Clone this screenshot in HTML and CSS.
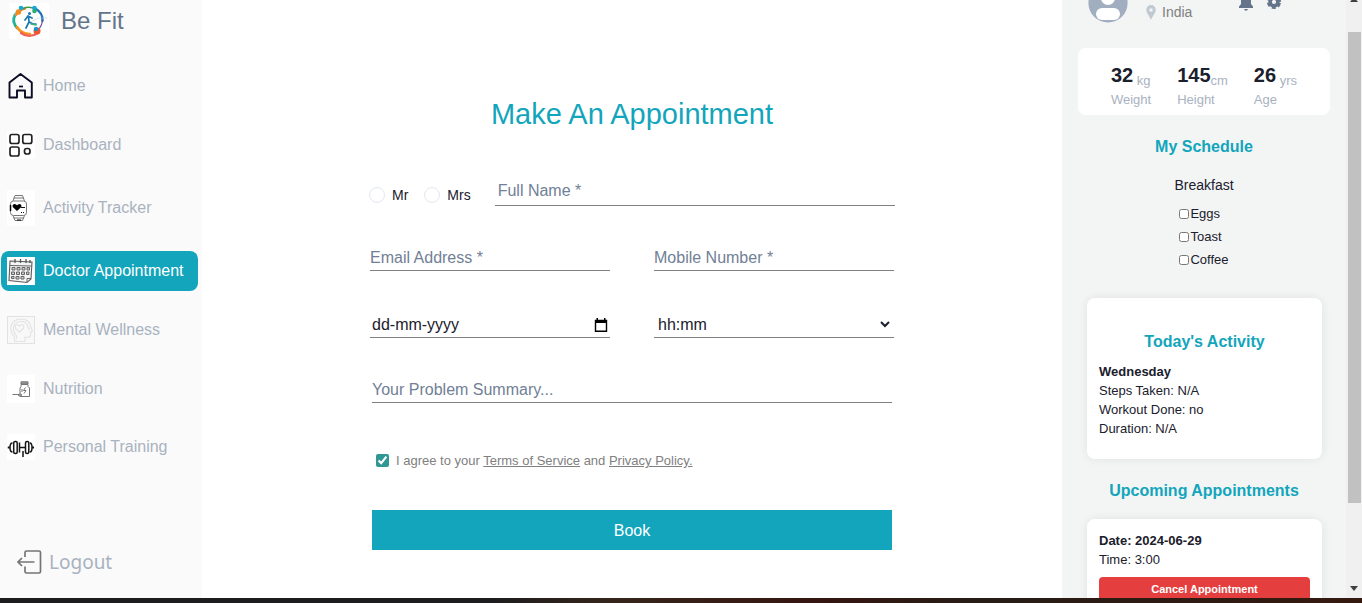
FILE: index.html
```html
<!DOCTYPE html>
<html lang="en">
<head>
<meta charset="utf-8">
<title>Be Fit</title>
<link rel="stylesheet" href="styles.css">
</head>
<body>
<div class="app">
  <aside class="sidebar">
    <div class="brand">
      <svg class="brand-logo" viewBox="0 0 40 36" aria-hidden="true">
        <rect width="40" height="36" fill="#fff"/>
        <g fill="none" stroke-linecap="round">
          <path d="M8 25A14 13 0 0 1 6 12" stroke="#1fb08c" stroke-width="2.600"/>
          <path d="M7 12A14 13 0 0 1 16 5.500" stroke="#f58a1f" stroke-width="2.400"/>
          <path d="M14 5.500Q20 3 27 6" stroke="#3c9b4e" stroke-width="1.500"/>
          <path d="M27 6Q34 10 33.500 18" stroke="#1c74bb" stroke-width="2.400"/>
          <path d="M33.500 17Q33 23 29 27" stroke="#6a4fa0" stroke-width="1.200"/>
          <path d="M8 24Q12 31 21 31" stroke="#f7941d" stroke-width="2.600"/>
          <path d="M12 30Q20 36 29 30" stroke="#f2605a" stroke-width="2.200"/>
          <path d="M4 20Q2.500 14 7 9" stroke="#35c3d6" stroke-width="1"/>
          <path d="M21 19L30 15L38 15" stroke="#b9cfdc" stroke-width=".6"/>
          <path d="M19.500 13L20 19L17 25M20 19L24 21L27 21M16 17L19 13L23 15" stroke="#1b78ae" stroke-width="1.700"/>
          <path d="M22 21L27 22" stroke="#3bb27a" stroke-width="1.500"/>
        </g>
        <circle cx="20.500" cy="10.500" r="1.500" fill="#1b78ae"/>
        <circle cx="12" cy="5" r="2.300" fill="#19a7e0"/>
        <circle cx="25.500" cy="5" r="2.300" fill="#19a7e0"/>
        <circle cx="25.500" cy="8" r="2.300" fill="#27ae73"/>
        <circle cx="9.500" cy="9" r="2.700" fill="#f58a1f"/>
        <circle cx="28" cy="28" r="3.500" fill="#f0562b"/>
        <circle cx="27" cy="26" r="2.200" fill="#1993d1"/>
      </svg>
      <span class="brand-name">Be Fit</span>
    </div>
    <nav class="nav">
      <a class="nav-item" href="#home">
        <svg class="nav-icon" viewBox="0 0 28 28" aria-hidden="true"><path d="M2.500 10.500L13.500 2L24.800 10.500V25.500H18V18.500H10V25.500H2.500Z" fill="none" stroke="#0b0b24" stroke-width="1.900" stroke-linejoin="round"/><path d="M12 14.500H16" stroke="#0b0b24" stroke-width="1.700"/></svg>
        Home</a>
      <a class="nav-item" href="#dashboard">
        <svg class="nav-icon" viewBox="0 0 28 28" aria-hidden="true"><rect width="28" height="28" fill="#fff"/><g fill="none" stroke="#222" stroke-width="1.700"><rect x="3" y="3.500" width="9" height="9" rx="2"/><rect x="15.800" y="3.500" width="9" height="9" rx="2"/><rect x="3" y="16" width="9" height="9" rx="2"/><rect x="17.500" y="17.500" width="5.500" height="5.500" rx="2.300"/></g></svg>
        Dashboard</a>
      <a class="nav-item" href="#activity">
        <svg class="nav-icon nav-icon-tall" viewBox="0 0 28 36" aria-hidden="true"><rect width="28" height="36" fill="#fff"/><g fill="none" stroke="#777" stroke-width="1"><rect x="3.500" y="11" width="16" height="14.500" rx="3"/><path d="M6 11L8 5.500H15.500L17.500 11M6.500 8H17M6 25.500L8 30.500H15.500L17.500 25.500M6.500 28H17"/></g><path d="M3.500 15V21" stroke="#000" stroke-width="1.500"/><path d="M10 21L5.700 17Q5 14 8 14L10 15.300L12 14Q15 14 14.300 17Z" fill="#000"/><path d="M14 17.500H18M14 22.500H15M16 22.500H17M10 30H14" stroke="#111"/></svg>
        Activity Tracker</a>
      <a class="nav-item nav-item-active" href="#doctor" aria-current="page">
        <svg class="nav-icon" viewBox="0 0 28 28" aria-hidden="true"><rect width="28" height="28" fill="#fff"/><path d="M3 4L25 5L24 22L20 25.500L2 23.500Z" fill="#f4f4f4" stroke="#5c5c5c" stroke-width="1.100"/><path d="M3 8.500L24.500 9M20 25V21.500H24" fill="none" stroke="#666"/><path d="M8 2V6M13.500 2V6M19 2V6M23 3V6" stroke="#555" stroke-width="1.300"/><g fill="#ccc" stroke="#666" stroke-width="1"><path d="M5 10.500H8V13H5ZM10 10.500H13V13H10ZM15 10.500H18V13H15ZM20 10.500H22.500V13H20ZM4.500 15H7.500V17.500H4.500ZM9.500 15H12.500V17.500H9.500ZM14.500 15H17.500V17.500H14.500ZM19.500 15H22V17.500H19.500ZM4.500 19.500H7V21.500H4.500ZM9 19.500H12V22H9ZM14 19.500H17V22H14Z"/></g></svg>
        Doctor Appointment</a>
      <a class="nav-item" href="#mental">
        <svg class="nav-icon" viewBox="0 0 28 28" aria-hidden="true"><rect x=".5" y=".5" width="27" height="27" fill="#f8f8f8" stroke="#e2e2e2"/><g fill="none" stroke="#e3e3e3" stroke-width="1.100"><path d="M7.500 25.500V21Q3 16 4 10Q6 3 14 3Q22 3 23.500 10L25.500 15L23.500 16V20Q23 22 18 21V25.500Z"/><path d="M12.500 16L8.500 12.500Q7.500 9 10.500 8.500L12.500 10L14.500 8.500Q17.500 9 16.500 12.500Z"/><path d="M9.500 23V20Q6 16 6.500 11Q8 5.500 14 5.500Q20 5.500 21 11L22.500 14"/></g></svg>
        Mental Wellness</a>
      <a class="nav-item" href="#nutrition">
        <svg class="nav-icon" viewBox="0 0 28 28" aria-hidden="true"><rect width="28" height="28" fill="#fff"/><g fill="none" stroke="#777" stroke-width="1"><path d="M14 9.500H21V11.500L22.500 13V21.500H13V13L14 11.500Z"/><path d="M14 6.800H21V9H14Z" fill="#999"/><path d="M18.500 12.500L16.500 15.500H19L17 18.500M5.500 19.500H12M11 20Q13 17.500 15 20Q13 22.500 11 20M15 14V17"/></g></svg>
        Nutrition</a>
      <a class="nav-item" href="#training">
        <svg class="nav-icon nav-icon-short" viewBox="0 0 28 26" aria-hidden="true"><rect width="28" height="26" fill="#fff"/><g fill="none" stroke="#151515" stroke-width="1.500"><rect x="6.700" y="7.500" width="3.500" height="12" rx="1.500"/><path d="M5.500 9Q3 9 3 13.500Q3 18 5.500 18M1.500 12.500V14.500M12.500 8.500V18.500M12.500 13.500H18M16 17V23"/><rect x="18.500" y="7.500" width="3.300" height="12" rx="1.500"/><path d="M22.800 9Q25 9 25 13.500Q25 18 22.800 18M26.300 12.500V14.500"/></g></svg>
        Personal Training</a>
    </nav>
    <a class="logout" href="#logout">
      <svg class="logout-icon" viewBox="0 0 26 26" aria-hidden="true"><path d="M9 8V3.500Q9 2 10.500 2H23Q24.500 2 24.500 3.500V22.500Q24.500 24 23 24H10.500Q9 24 9 22.500V17.500M18.500 13H2M6 9L2 13L6 17" fill="none" stroke="#757575" stroke-width="1.700"/></svg>
      Logout</a>
  </aside>

  <main class="main">
    <form class="form">
      <h1 class="form-title">Make An Appointment</h1>
      <div class="name-row">
        <label class="radio"><input type="radio" name="title" value="mr">Mr</label>
        <label class="radio"><input type="radio" name="title" value="mrs">Mrs</label>
        <input class="field field-name" type="text" placeholder="Full Name *" aria-label="Full Name">
      </div>
      <div class="pair">
        <input class="field" type="email" placeholder="Email Address *" aria-label="Email Address">
        <input class="field" type="tel" placeholder="Mobile Number *" aria-label="Mobile Number">
      </div>
      <div class="pair">
        <div class="field date">
          <input class="date-input" type="text" placeholder="dd-mm-yyyy" aria-label="Date">
          <button class="date-button" type="button" aria-label="Open calendar"><svg viewBox="0 0 14 14" aria-hidden="true"><path d="M1.500 2.500H12.500V13.200H1.500Z" fill="none" stroke="#000" stroke-width="1.400"/><path d="M1 2H13V5H1ZM2.500 0H4V3H2.500ZM10 0H11.500V3H10Z"/></svg></button>
        </div>
        <div class="field select-wrap">
          <select class="select" aria-label="Time"><option>hh:mm</option></select>
          <svg class="chevron" viewBox="0 0 10 7" aria-hidden="true"><path d="M1 1L5 5L9 1" fill="none" stroke="#1a202c" stroke-width="2"/></svg>
        </div>
      </div>
      <div class="wide">
        <input class="field" type="text" placeholder="Your Problem Summary..." aria-label="Your Problem Summary">
        <div class="agree">
          <input class="agree-box" type="checkbox" id="agree" checked>
          <label for="agree">I agree to your <a href="#terms">Terms of Service</a> and <a href="#privacy">Privacy Policy.</a></label>
        </div>
        <button class="book" type="submit">Book</button>
      </div>
    </form>
  </main>

  <aside class="panel">
    <div class="profile">
      <svg class="avatar" viewBox="0 0 40 40" aria-hidden="true"><circle cx="20" cy="20" r="19.600" fill="#a0aec0"/><circle cx="20" cy="15" r="7" fill="#fff"/><rect x="8" y="25" width="24" height="12" rx="6" fill="#fff"/></svg>
      <div class="place">
        <svg class="pin" viewBox="0 0 10 15" aria-hidden="true"><path d="M5 0A4.700 4.700 0 0 0 .3 5C.3 8 3.500 11 5 15C6.500 11 9.700 8 9.700 5A4.700 4.700 0 0 0 5 0ZM5 3.300A1.700 1.700 0 1 1 5 6.700A1.700 1.700 0 0 1 5 3.300Z" fill="#c1c9d2"/></svg>
        India
      </div>
      <div class="tools">
        <button class="tool" type="button" aria-label="Notifications"><svg viewBox="0 0 16 18" aria-hidden="true"><path d="M8 0Q3 1 3 7V11L1 13.500V15H15V13.500L13 11V7Q13 1 8 0ZM6 16H10Q9.500 17.700 8 17.700Q6.500 17.700 6 16Z" fill="#64748b"/></svg></button>
        <button class="tool" type="button" aria-label="Settings"><svg viewBox="0 0 16 18" aria-hidden="true"><circle cx="8" cy="9" r="3.900" fill="none" stroke="#64748b" stroke-width="3.600"/><circle cx="8" cy="9" r="5.700" fill="none" stroke="#64748b" stroke-width="2.800" stroke-dasharray="3.800 2.169" stroke-dashoffset="-1.100"/></svg></button>
      </div>
    </div>
    <div class="stats">
      <div class="stat"><div class="stat-value"><strong>32</strong>&nbsp;<span>kg</span></div><div class="stat-label">Weight</div></div>
      <div class="stat"><div class="stat-value"><strong>145</strong><span>cm</span></div><div class="stat-label">Height</div></div>
      <div class="stat"><div class="stat-value"><strong>26</strong>&nbsp;<span>yrs</span></div><div class="stat-label">Age</div></div>
    </div>
    <section class="schedule">
      <h2 class="heading">My Schedule</h2>
      <h3 class="meal">Breakfast</h3>
      <div class="foods">
        <label class="food"><input type="checkbox">Eggs</label>
        <label class="food"><input type="checkbox">Toast</label>
        <label class="food"><input type="checkbox">Coffee</label>
      </div>
    </section>
    <section class="card activity">
      <h2 class="heading">Today's Activity</h2>
      <p><strong>Wednesday</strong></p>
      <p>Steps Taken: N/A</p>
      <p>Workout Done: no</p>
      <p>Duration: N/A</p>
    </section>
    <h2 class="heading upcoming">Upcoming Appointments</h2>
    <section class="card">
      <p><strong>Date: 2024-06-29</strong></p>
      <p>Time: 3:00</p>
      <button class="cancel" type="button">Cancel Appointment</button>
    </section>
  </aside>

  <div class="scrollbar" aria-hidden="true">
    <svg class="arrow" viewBox="0 0 8 5"><path d="M0 5L4 0L8 5Z" fill="#404040"/></svg>
    <div class="track"><div class="thumb"></div></div>
    <svg class="arrow" viewBox="0 0 8 5"><path d="M0 0H8L4 5Z" fill="#404040"/></svg>
  </div>
</div>
<div class="taskbar"></div>
</body>
</html>
```
FILE: styles.css
```css
* {
  box-sizing: border-box;
}

body {
  margin: 0;
  height: 100vh;
  display: flex;
  flex-direction: column;
  overflow: hidden;
  background: #fff;
  color: #1a202c;
  font-family: "Liberation Sans", Arial, sans-serif;
  font-size: 13px;
  line-height: 19px;
}

h1, h2, h3, p {
  margin: 0;
}

input, select, button {
  font: inherit;
  color: inherit;
  margin: 0;
}

button {
  border: 0;
  padding: 0;
  background: none;
  cursor: pointer;
}

.app {
  flex: 1;
  min-height: 0;
  display: grid;
  grid-template-columns: 202px 1fr 284px 16px;
  grid-template-rows: 100%;
  overflow: hidden;
}

.taskbar {
  height: 5px;
  background: linear-gradient(90deg, #1d1c1e 0%, #1d1c1e 36%, #35251a 45%, #35150f 60%, #261c16 72%, #35190f 100%);
}

/* Sidebar */
.sidebar {
  display: flex;
  flex-direction: column;
  background: #fafafa;
  padding: 3px 4px 22px 1px;
}

.brand {
  display: flex;
  align-items: center;
  gap: 12px;
  padding-left: 8px;
}

.brand-logo {
  width: 40px;
  height: 36px;
}

.brand-name {
  font-size: 24px;
  line-height: 36px;
  color: #64748b;
}

.nav {
  display: flex;
  flex-direction: column;
  gap: 19px;
  margin-top: 27px;
}

.nav-item {
  display: flex;
  align-items: center;
  gap: 8px;
  padding: 6px;
  border-radius: 8px;
  font-size: 16px;
  line-height: 20px;
  color: #a9b2bf;
  text-decoration: none;
}

.nav-item-active {
  background: #12a5bc;
  color: #fff;
}

.nav-icon {
  width: 28px;
  height: 28px;
}

.nav-icon-tall {
  height: 36px;
}

.nav-icon-short {
  height: 26px;
}

.logout {
  display: flex;
  align-items: center;
  gap: 7px;
  margin-top: auto;
  padding-left: 15px;
  font-family: "Noto Sans", sans-serif;
  font-size: 19px;
  line-height: 28px;
  color: #a9b2bf;
  text-decoration: none;
}

.logout-icon {
  width: 26px;
  height: 26px;
}

/* Appointment form */
.main {
  display: flex;
  justify-content: center;
  align-items: flex-start;
  padding-top: 96px;
}

.form {
  width: 100%;
  max-width: 526px;
}

.form-title {
  font-size: 29px;
  line-height: 36px;
  font-weight: 400;
  text-align: center;
  color: #12a5bc;
}

.name-row {
  display: flex;
  align-items: center;
  margin-top: 44px;
}

.radio {
  display: flex;
  align-items: center;
  gap: 7px;
  margin-right: 16px;
  padding-top: 8px;
  font-size: 14px;
}

.radio input {
  appearance: none;
  width: 16px;
  height: 16px;
  border: 1px solid #e2e8f0;
  border-radius: 50%;
}

.radio input:checked {
  border: 5px solid #12a5bc;
}

.field {
  width: 100%;
  height: 26px;
  padding: 0;
  border: 0;
  border-bottom: 1px solid #808080;
  border-radius: 0;
  background: transparent;
  font-size: 16px;
  line-height: 24px;
  outline: 0;
}

.field::placeholder {
  color: #718096;
  opacity: 1;
}

.field-name {
  flex: 1;
  width: auto;
  min-width: 0;
  height: 30px;
  margin-left: 8px;
  padding-left: 3px;
}

.pair {
  display: grid;
  grid-template-columns: 1fr 1fr;
  gap: 44px;
  padding: 0 1px;
  margin-top: 39px;
}

.pair + .pair {
  margin-top: 41px;
}

.date,
.select-wrap {
  display: flex;
  align-items: center;
  position: relative;
}

.date-input {
  flex: 1;
  min-width: 0;
  padding: 0 2px;
  border: 0;
  background: transparent;
  outline: 0;
}

.date-input::placeholder {
  color: #1a202c;
  opacity: 1;
}

.date-button {
  display: flex;
  margin-right: 2px;
}

.date-button svg {
  width: 14px;
  height: 14px;
}

.select {
  appearance: none;
  width: 100%;
  padding: 0 20px 0 4px;
  border: 0;
  background: transparent;
  outline: 0;
}

.chevron {
  position: absolute;
  right: 4px;
  top: 9px;
  width: 10px;
  height: 7px;
  pointer-events: none;
}

.wide {
  padding: 0 3px;
  margin-top: 39px;
}

.agree {
  display: flex;
  align-items: center;
  gap: 7px;
  margin: 48px 0 40px 4px;
  color: #808080;
}

.agree a {
  color: inherit;
}

.agree-box {
  width: 13px;
  height: 13px;
  accent-color: #319795;
}

.book {
  display: block;
  width: 100%;
  height: 40px;
  background: #12a5bc;
  color: #fff;
  font-size: 16px;
}

/* Right panel */
.panel {
  background: #f3f5f5;
  padding: 0 16px;
}

/* The panel is scrolled so only the lower part of the profile shows */
.profile {
  display: flex;
  align-items: center;
  margin-top: -17px;
  padding-left: 10px;
}

.avatar {
  width: 40px;
  height: 40px;
}

.place {
  display: flex;
  align-items: center;
  gap: 6px;
  margin-left: 18px;
  padding-top: 18px;
  font-size: 14px;
  color: #808080;
}

.pin {
  width: 10px;
  height: 15px;
}

.tools {
  display: flex;
  gap: 12px;
  margin: 0 48px 2px auto;
}

.tool {
  display: flex;
}

.tool svg {
  width: 16px;
  height: 18px;
}

.stats {
  display: flex;
  justify-content: center;
  gap: 26px;
  margin-top: 25px;
  padding: 15px 0 6px;
  border-radius: 8px;
  background: #fff;
  color: #a9b2bf;
}

.stat-value {
  display: flex;
  align-items: flex-end;
  height: 27px;
  line-height: 18px;
}

.stat-value strong {
  align-self: flex-start;
  font-size: 20px;
  line-height: 24px;
  color: #1a202c;
}

.schedule {
  margin-top: 22px;
}

.heading {
  font-size: 16px;
  line-height: 20px;
  text-align: center;
  color: #12a5bc;
}

.meal {
  margin-top: 18px;
  font-size: 14px;
  line-height: 20px;
  font-weight: 400;
  text-align: center;
}

.foods {
  display: flex;
  flex-direction: column;
  gap: 4px;
  width: max-content;
  margin: 9px auto 0;
}

.food {
  display: flex;
  align-items: center;
  gap: 1px;
}

.food input {
  width: 10px;
  height: 10px;
}

.card {
  margin: 0 8px 0 9px;
  padding: 12px;
  border-radius: 8px;
  background: #fff;
  box-shadow: 0 0 10px rgba(0, 0, 0, 0.08);
}

.activity {
  margin-top: 29px;
  padding: 34px 12px 21px;
}

.activity .heading {
  margin-bottom: 10px;
}

.upcoming {
  margin: 22px 0 18px;
}

.cancel {
  width: 100%;
  height: 25px;
  margin-top: 8px;
  border-radius: 4px;
  background: #e53e3e;
  color: #fff;
  font-size: 11px;
  font-weight: 700;
}

/* Scroll bar */
.scrollbar {
  display: flex;
  flex-direction: column;
  align-items: center;
  background: #f0f0f0;
  margin-top: -3px;
  padding-bottom: 7px;
}

.arrow {
  width: 8px;
  height: 5px;
}

.track {
  flex: 1;
  width: 13px;
  padding-top: 30px;
}

.thumb {
  height: 85%;
  background: #c1c1c1;
}
```
